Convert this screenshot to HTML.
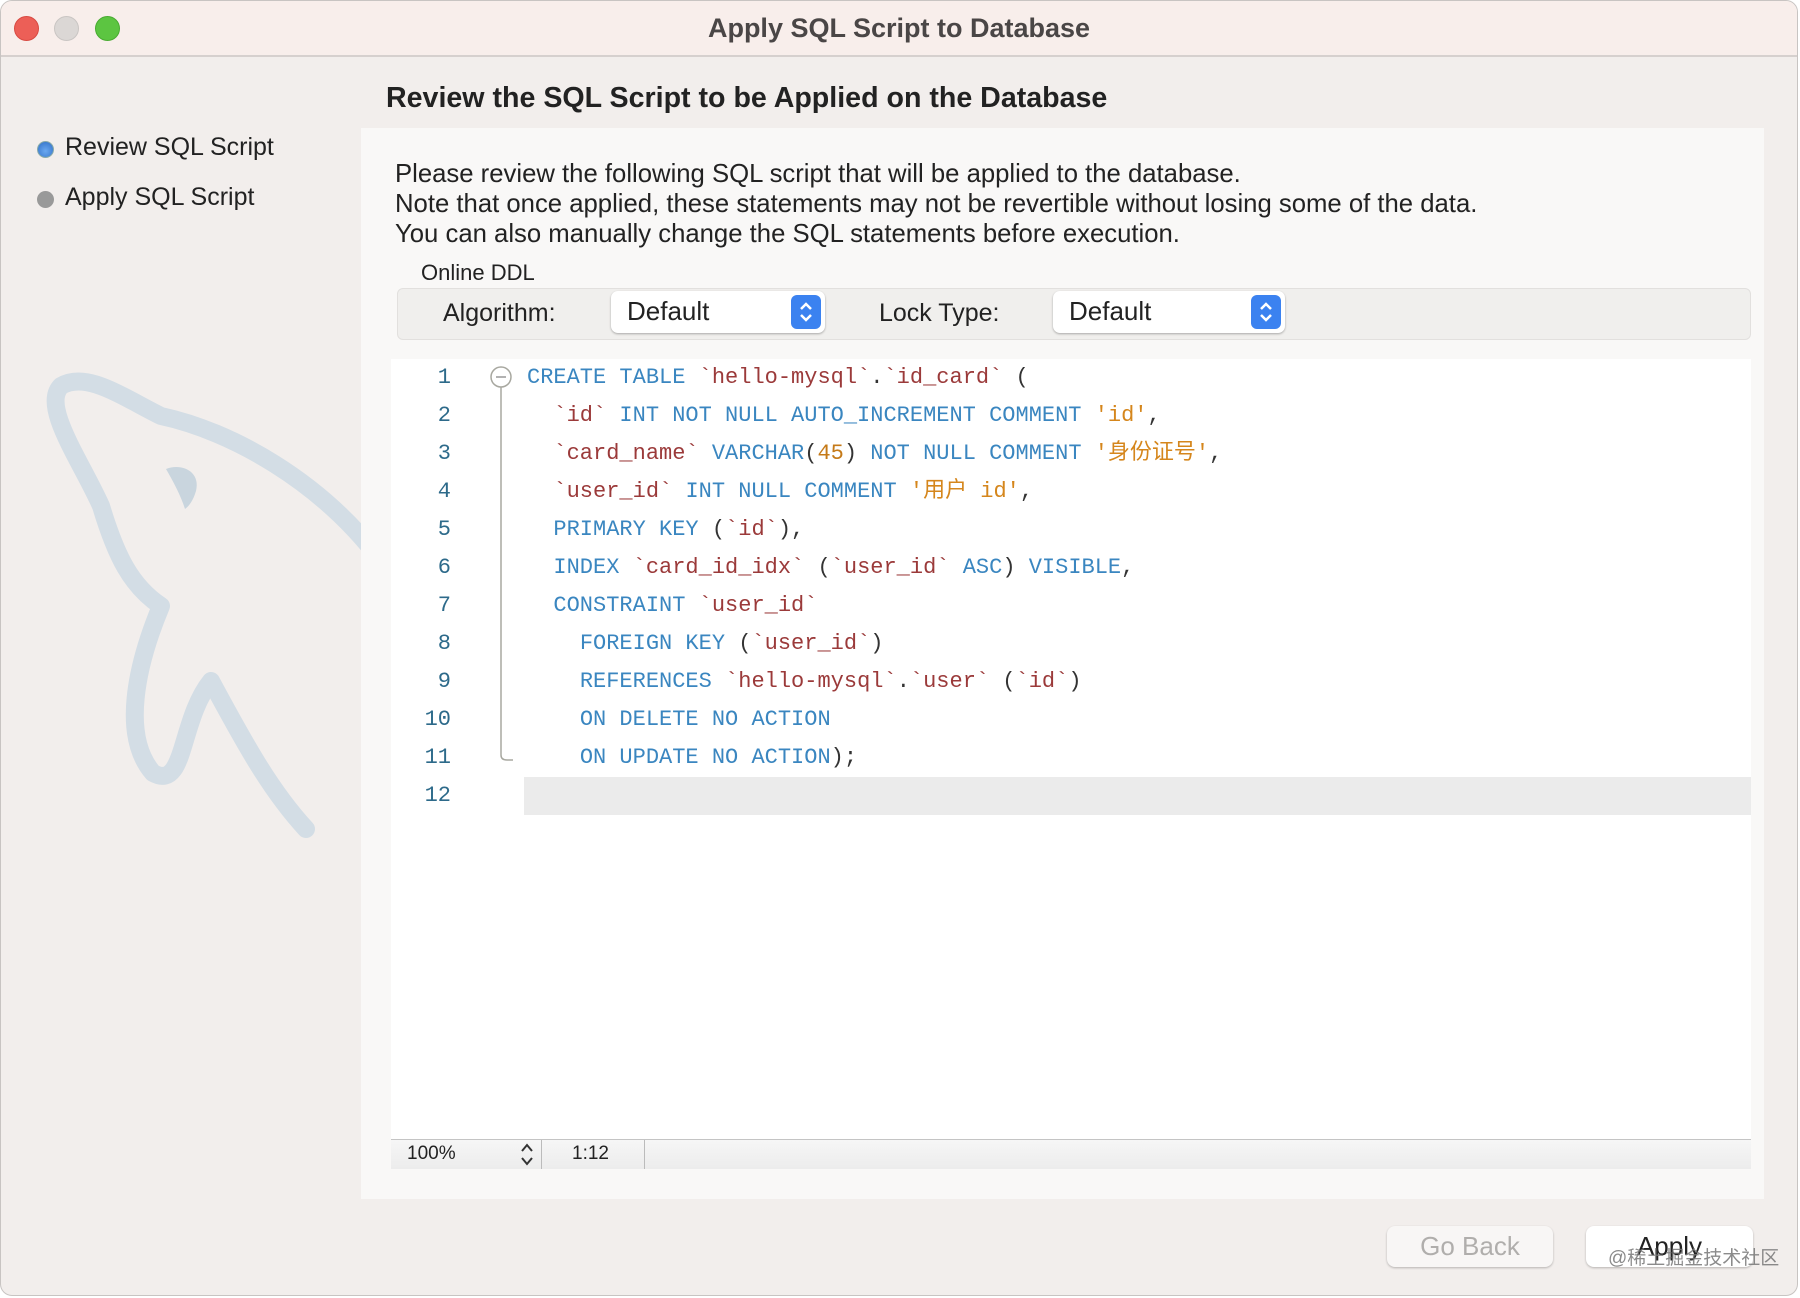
<!DOCTYPE html>
<html><head><meta charset="utf-8"><style>
*{margin:0;padding:0;box-sizing:border-box}
body{width:1800px;height:1298px;background:#fff;font-family:"Liberation Sans","Noto Sans CJK SC",sans-serif;position:relative;overflow:hidden;color:#222}
.win{position:absolute;left:0;top:0;width:1798px;height:1296px;background:#f2eeec;border-radius:12px;overflow:hidden;border:1px solid #c8c4c2}
.title{position:absolute;left:0;top:0;width:100%;height:56px;background:#f8eeeb;border-bottom:2px solid #d6d0ce;text-align:center;font-weight:bold;font-size:27px;line-height:54px;color:#4a4646}
.tl{position:absolute;top:15px;width:25px;height:25px;border-radius:50%}
.a{position:absolute;white-space:pre}
.panel{position:absolute;left:360px;top:127px;width:1403px;height:1071px;background:#f9f8f7}
.p{font-size:25.7px;color:#222}
.opt{position:absolute;left:396px;top:287px;width:1354px;height:52px;background:#f0efed;border:1px solid #e2e0de;border-radius:6px}
.sel{position:absolute;height:42px;background:#fff;border-radius:7px;box-shadow:0 1px 2px rgba(0,0,0,.3);font-size:26px;line-height:40px;padding-left:16px}
.step{position:absolute;right:4px;top:4px;width:30px;height:34px;background:#3b82f0;border-radius:6px}
.ed{position:absolute;left:390px;top:358px;width:1360px;height:780px;background:#fff}
.ln{position:absolute;width:60px;text-align:right;color:#2d6a8a;font-family:"Liberation Mono",monospace;font-size:22px}
.k{color:#3a86c0}.i{color:#9b3a3a}.s{color:#d5861c}.n{color:#c57a18}.o{color:#333}
.btn{position:absolute;top:1225px;height:41px;border-radius:8px;font-size:26px;text-align:center;line-height:40px;background:#fff;box-shadow:0 1px 2px rgba(0,0,0,.25)}
</style></head><body>
<div class="win">
<div class="title">Apply SQL Script to Database</div>
<div class="tl" style="left:13px;background:#ec5f57;border:1px solid #d84a42"></div>
<div class="tl" style="left:53px;background:#dbd7d5;border:1px solid #c9c5c3"></div>
<div class="tl" style="left:94px;background:#5cc541;border:1px solid #48ab31"></div>

<svg style="position:absolute;left:0;top:0" width="400" height="900">
<path d="M380 560 C320 480,230 430,160 415 C120 395,85 370,60 385 C40 405,80 460,100 505 C115 555,130 585,160 605 C135 665,120 735,152 772 C185 790,178 720,210 680 C245 745,270 790,305 828" fill="none" stroke="#d3dde5" stroke-width="18" stroke-linecap="round" stroke-linejoin="round"/>
<path d="M165 468 C180 462,200 470,195 490 C192 500,188 505,184 508 C180 495,172 480,165 468Z" fill="#c9d5de"/>
</svg>

<div class="a" style="left:385px;top:81px;font-size:28.6px;font-weight:bold;color:#222">Review the SQL Script to be Applied on the Database</div>

<div style="position:absolute;left:36px;top:140px;width:17px;height:17px;border-radius:50%;background:radial-gradient(circle at 50% 60%,#6aa8f0,#2f6fc6);border:1px solid #8aa"></div>
<div class="a" style="left:64px;top:132px;font-size:25px">Review SQL Script</div>
<div style="position:absolute;left:36px;top:190px;width:17px;height:17px;border-radius:50%;background:#999"></div>
<div class="a" style="left:64px;top:182px;font-size:25px">Apply SQL Script</div>

<div class="panel"></div>
<div class="a p" style="left:394px;top:158px;line-height:30px">Please review the following SQL script that will be applied to the database.
Note that once applied, these statements may not be revertible without losing some of the data.
You can also manually change the SQL statements before execution.</div>
<div class="a" style="left:420px;top:259px;font-size:22px">Online DDL</div>
<div class="opt"></div>
<div class="a" style="left:442px;top:298px;font-size:25px">Algorithm:</div>
<div class="sel" style="left:610px;top:290px;width:214px">Default<div class="step"><svg width="30" height="34"><path d="M10 14 L15 9 L20 14 M10 20 L15 25 L20 20" fill="none" stroke="#fff" stroke-width="2.5"/></svg></div></div>
<div class="a" style="left:878px;top:298px;font-size:25px">Lock Type:</div>
<div class="sel" style="left:1052px;top:290px;width:232px">Default<div class="step"><svg width="30" height="34"><path d="M10 14 L15 9 L20 14 M10 20 L15 25 L20 20" fill="none" stroke="#fff" stroke-width="2.5"/></svg></div></div>

<div class="ed"></div>
<div style="position:absolute;left:523px;top:776px;width:1227px;height:38px;background:#ebebeb"></div>
<svg style="position:absolute;left:488px;top:362px" width="30" height="400"><circle cx="12" cy="14" r="10" fill="#fff" stroke="#a8a8a0" stroke-width="1.5"/><line x1="7" y1="14" x2="17" y2="14" stroke="#999" stroke-width="1.5"/><path d="M12 24 V392 Q12 397 18 397 H24" fill="none" stroke="#a8a8a0" stroke-width="1.5"/></svg>
<div class="ln" style="left:390px;top:358px;line-height:38px">1<br>2<br>3<br>4<br>5<br>6<br>7<br>8<br>9<br>10<br>11<br>12</div>
<div class="a o" style="left:526px;top:358px;line-height:38px;font-family:'Liberation Mono','Noto Sans CJK SC',monospace;font-size:22px"><span class="k">CREATE TABLE</span> <span class="i">`hello-mysql`</span>.<span class="i">`id_card`</span> (
  <span class="i">`id`</span> <span class="k">INT NOT NULL AUTO_INCREMENT COMMENT</span> <span class="s">'id'</span>,
  <span class="i">`card_name`</span> <span class="k">VARCHAR</span>(<span class="n">45</span>) <span class="k">NOT NULL COMMENT</span> <span class="s">'身份证号'</span>,
  <span class="i">`user_id`</span> <span class="k">INT NULL COMMENT</span> <span class="s">'用户 id'</span>,
  <span class="k">PRIMARY KEY</span> (<span class="i">`id`</span>),
  <span class="k">INDEX</span> <span class="i">`card_id_idx`</span> (<span class="i">`user_id`</span> <span class="k">ASC</span>) <span class="k">VISIBLE</span>,
  <span class="k">CONSTRAINT</span> <span class="i">`user_id`</span>
    <span class="k">FOREIGN KEY</span> (<span class="i">`user_id`</span>)
    <span class="k">REFERENCES</span> <span class="i">`hello-mysql`</span>.<span class="i">`user`</span> (<span class="i">`id`</span>)
    <span class="k">ON DELETE NO ACTION</span>
    <span class="k">ON UPDATE NO ACTION</span>);</div>

<div style="position:absolute;left:390px;top:1138px;width:1360px;height:30px;background:linear-gradient(#f6f6f6,#ececec);border-top:1px solid #c4c4c4"></div>
<div class="a" style="left:406px;top:1142px;font-size:19px">100%</div>
<svg style="position:absolute;left:518px;top:1141px" width="16" height="26"><path d="M3 9 L8 3 L13 9 M3 16 L8 22 L13 16" fill="none" stroke="#333" stroke-width="2"/></svg>
<div style="position:absolute;left:540px;top:1139px;width:1px;height:29px;background:#bbb"></div>
<div class="a" style="left:571px;top:1142px;font-size:19px">1:12</div>
<div style="position:absolute;left:643px;top:1139px;width:1px;height:29px;background:#bbb"></div>

<div class="btn" style="left:1386px;width:166px;color:#b0aeac;background:#f8f6f5">Go Back</div>
<div class="btn" style="left:1585px;width:167px;color:#222">Apply</div>
<div class="a" style="left:1607px;top:1242px;font-size:19px;color:#777;opacity:.85">@稀土掘金技术社区</div>
</div>
</body></html>
